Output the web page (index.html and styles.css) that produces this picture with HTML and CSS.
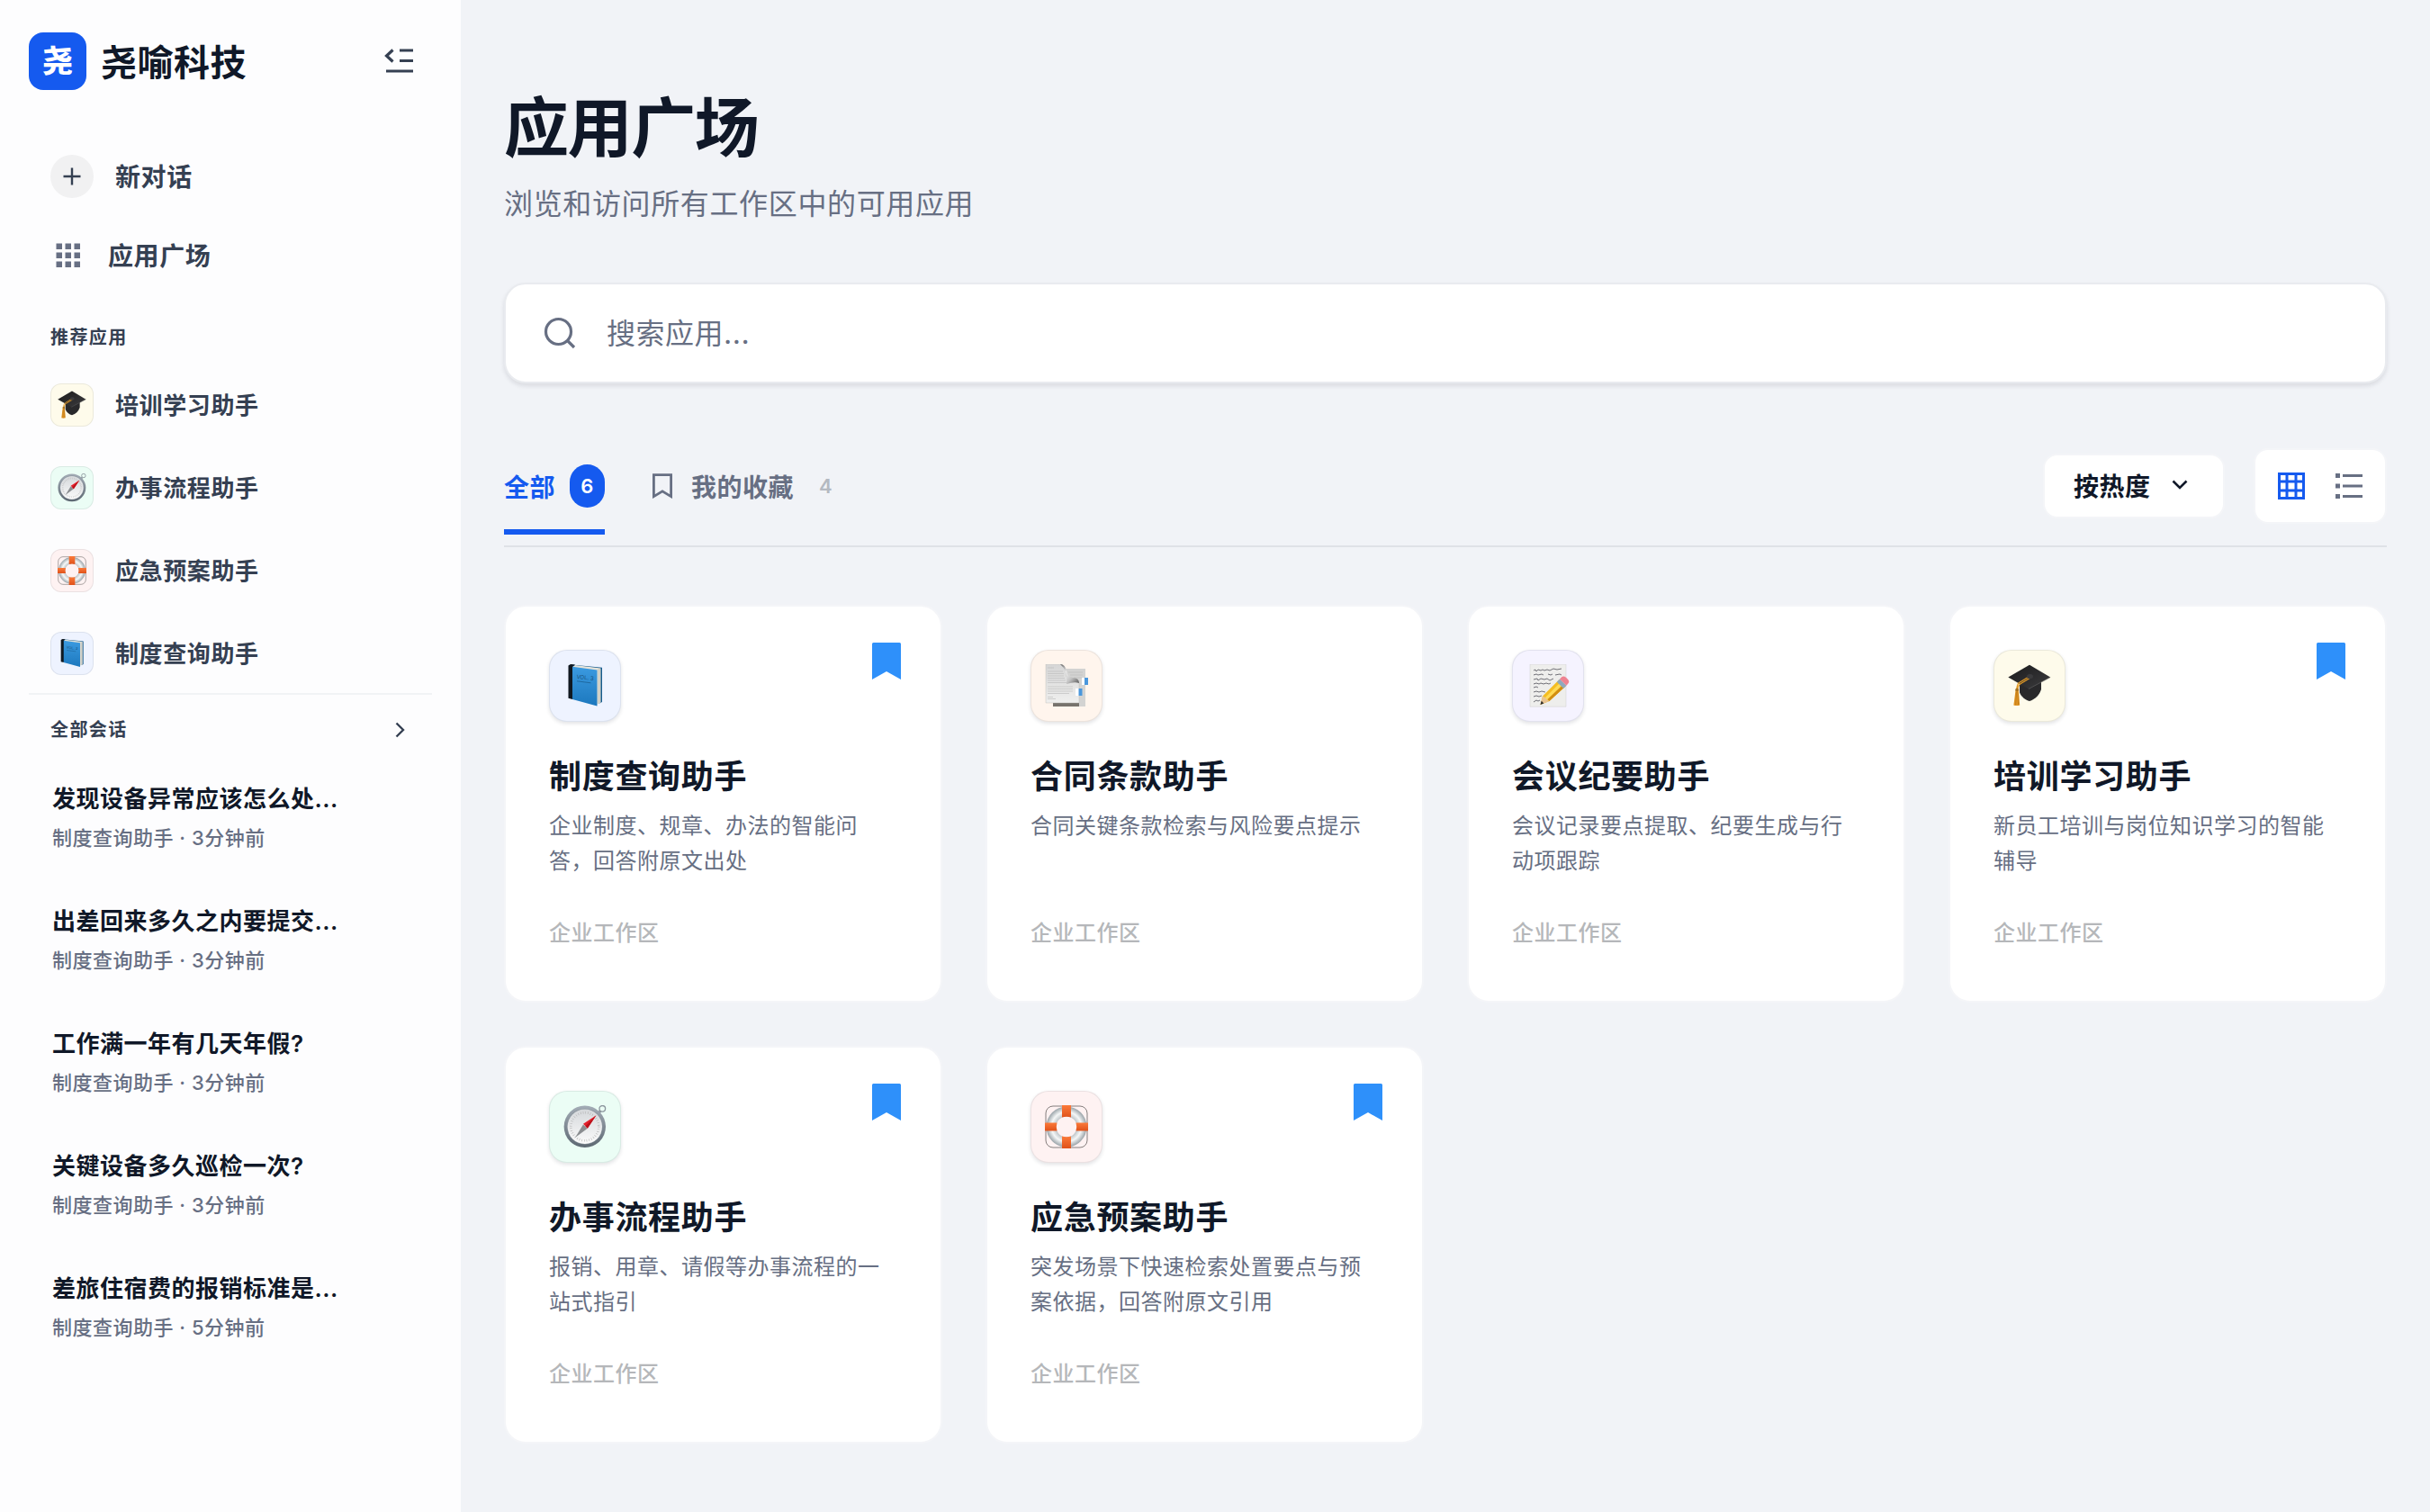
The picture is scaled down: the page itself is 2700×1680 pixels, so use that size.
FILE: index.html
```html
<!DOCTYPE html>
<html lang="zh-CN">
<head>
  <meta charset="UTF-8" />
  <meta name="viewport" content="width=device-width, initial-scale=1" />
  <title>应用广场 - 尧喻科技</title>
  <link rel="stylesheet" href="styles.css">
</head>
<body>

  <!-- Shared app icons -->
  <svg class="sprite" aria-hidden="true">
    <defs>
      <linearGradient id="gBook" x1="0" y1="0" x2="0" y2="1"><stop offset="0" stop-color="#3b9ae0" /><stop offset="1" stop-color="#1c78be" /></linearGradient>
      <linearGradient id="gCap" x1="0" y1="0" x2="1" y2="1"><stop offset="0" stop-color="#1b1b1c" /><stop offset="1" stop-color="#3c3c3e" /></linearGradient>
      <linearGradient id="gRim" x1="0" y1="0" x2="0" y2="1"><stop offset="0" stop-color="#a3acb6" /><stop offset="1" stop-color="#5d6872" /></linearGradient>
      <linearGradient id="gDial" x1="0" y1="0" x2="0" y2="1"><stop offset="0" stop-color="#d5d8db" /><stop offset="1" stop-color="#fbfbfb" /></linearGradient>
      <linearGradient id="gPaper" x1="0" y1="0" x2="0" y2="1"><stop offset="0" stop-color="#d6d6d6" /><stop offset="1" stop-color="#efefee" /></linearGradient>
      <linearGradient id="gCurl" x1="0" y1="0" x2="1" y2="1"><stop offset="0" stop-color="#5a5a5a" /><stop offset=".35" stop-color="#f0f0f0" /><stop offset=".65" stop-color="#c4c4c4" /><stop offset="1" stop-color="#555" /></linearGradient>
      <radialGradient id="gBuoy" gradientUnits="userSpaceOnUse" cx="24" cy="24" r="22"><stop offset=".5" stop-color="#b9c0c4" /><stop offset=".75" stop-color="#f5f7f7" /><stop offset="1" stop-color="#a2abb0" /></radialGradient>
      <linearGradient id="gBand" x1="0" y1="0" x2="0" y2="1"><stop offset="0" stop-color="#fb7a3a" /><stop offset="1" stop-color="#e0521a" /></linearGradient>
    </defs>

    <symbol id="app-cap" viewBox="0 0 48 48">
      <path d="M13 20v11.5c2 5 6.5 8.200 11 9.500 6-2 11-6.500 13-13V17z" fill="#29292b" />
      <path d="M24 .7 47.200 14.500 23 27.500 .3 14.500z" fill="url(#gCap)" />
      <path d="M23 27.500 47.200 14.500" stroke="#666" stroke-width=".6" />
      <path d="M24 13.500 12.500 20.500Q10 22 9.800 29M25 15 14 21.700Q11 23.500 10.700 29" fill="none" stroke="#e29a26" stroke-width="1.300" />
      <ellipse cx="24.500" cy="13.600" rx="3.500" ry="2.700" fill="#3b3b3d" />
      <path d="M8.600 28.500h3.200l1.400 17q-3.500 1.200-6.800 0z" fill="#df9423" />
      <path d="M9.500 31 8.700 45M11 31l.6 14" stroke="#a76710" stroke-width=".5" />
      <circle cx="10.200" cy="28.500" r="1.900" fill="#a87320" />
    </symbol>

    <symbol id="app-compass" viewBox="0 0 48 48">
      <circle cx="43.300" cy="3.800" r="3.300" fill="none" stroke="#8b959d" stroke-width="1.300" />
      <path d="M39 9l2-2.500" stroke="#8b959d" stroke-width="3" />
      <circle cx="23.800" cy="23.800" r="23.200" fill="url(#gRim)" />
      <circle cx="23.800" cy="23.600" r="19.800" fill="#8b959d" />
      <circle cx="23.800" cy="23.800" r="19.200" fill="url(#gDial)" />
      <circle cx="23.800" cy="23.800" r="15.500" fill="none" stroke="#b4b4b4" stroke-width="2.600" stroke-dasharray=".6 2.110" />
      <path d="M22 21.500 13 36 26.500 26z" fill="#8a8d90" />
      <path d="M36.500 11.200 22 20.800l4.800 5z" fill="#e3202b" />
      <path d="M36.500 11.200 24.400 23.300l2.400 2.500z" fill="#b9101a" />
    </symbol>

    <symbol id="app-buoy" viewBox="0 0 48 48">
      <rect x="1" y="1" width="46" height="46" rx="8" fill="none" stroke="#77716f" stroke-width=".9" />
      <circle cx="24" cy="24" r="17" fill="none" stroke="url(#gBuoy)" stroke-width="11" />
      <path d="M19 0h10v13.500q-5-1.500-10 0z" fill="url(#gBand)" />
      <path d="M19 48h10V34.500q-5 1.500-10 0z" fill="url(#gBand)" />
      <path d="M0 19.500v9h13.500q-1.500-4.500 0-9z" fill="url(#gBand)" />
      <path d="M48 19.500v9H34.500q1.500-4.500 0-9z" fill="url(#gBand)" />
    </symbol>

    <symbol id="app-contract" viewBox="0 0 48 48">
      <path d="M9 5h36v42H9z" fill="#d3d3d2" />
      <path d="M9 43h29v4H9z" fill="#77736d" />
      <path d="M26 9h16M28 12h14M32 15h9" stroke="#bbb" stroke-width=".6" />
      <path d="M1 0h17q6 3 6 14 11 1 14 7v22H1z" fill="url(#gPaper)" stroke="#b5b5b4" stroke-width=".4" />
      <path d="M3 4h7M3 8h17M3 10.500h18M3 13h18M3 15.500h19M3 18h20M3 20.500h22M3 25h28M3 27.500h28M3 30h28M3 32.500h24M3 36.500h6M3 38.500h9" stroke="#b8b8b8" stroke-width=".6" />
      <path d="M17 0q6 0 7 8 1 6 7 7 7 0 7 6-5-2-14 1 2-15-7-22z" fill="url(#gCurl)" />
      <path d="M41 15h4v8h-4z" fill="#fff" /><path d="M44 15h4v8h-4z" fill="#4a97dc" />
      <path d="M34 27h4v8h-4z" fill="#fff" /><path d="M37.500 27h4v8h-4z" fill="#4a97dc" />
    </symbol>

    <symbol id="app-memo" viewBox="0 0 48 48">
      <path d="M4 .2h40v47H4z" fill="#eeeeec" stroke="#cfcfcd" stroke-width=".5" />
      <path d="M8 7l2-1 1 2 2-2 3 1 2-1 2 1 3-1 3 1 4-2 4 1 5-1M8 12l3-1 2 1 4-1 2 1m5-1 3 1 2-1m3 1 5-1 2 1M8 17l4-1 1 2 3-2 4 1 3-1 3 2 4-2M8 22l3-1 3 1 2-1 3 1 3-1 3 1 2-1M8 26l3-1 2 1M8 31l3-1 3 1 3-1 4 1M8 36l3-1 3 1 3-1M8 42l3-2 2 1 2-1" fill="none" stroke="#62626a" stroke-width=".9" />
      <path d="M15.500 45 18 35.500 36 17.500 43.500 24.500 25.500 41z" fill="#f4bd22" />
      <path d="M20.500 37.500 38.500 19.500 41 22 23 40z" fill="#ffda55" />
      <path d="M25.500 41l18-16.500-2.200-2.200L23.500 39z" fill="#d18e12" />
      <path d="M15.500 45 18 35.500l3 1.500 2 2.500 2.500 1.500z" fill="#e8c391" />
      <path d="M15.500 45l1.200-4.200 2.700 2.700z" fill="#2e2c2a" />
      <path d="M33.800 19.800 37 16.500l7.500 7.200-3.300 3.200z" fill="#8fa9bd" />
      <path d="M37 16.500 39.500 14q2-1.500 4.500.8l2 2q2.200 2.400.5 4.500l-2 2.400z" fill="#ee8290" />
    </symbol>

    <symbol id="mark" viewBox="0 0 32 41">
      <path d="M1.500 0h29A1.500 1.500 0 0 1 32 1.500V41L16 32 0 41V1.500A1.500 1.500 0 0 1 1.500 0z" fill="#2e90fa" />
    </symbol>
  </svg>

  <div class="layout">
    <aside class="sidebar">
      <div class="brand">
        <div class="logo">尧</div>
        <div class="brand-name">尧喻科技</div>
        <svg class="collapse" width="34" height="32" viewBox="0 0 34 32" fill="none" stroke="#354052" stroke-width="3.2">
          <path d="M10.500 3.500 3.500 10l7 6.500M18 4h15M18 15.500h15M3 27h30" />
        </svg>
      </div>

      <nav class="nav">
        <a class="nav-item new-chat">
          <span class="plus">
            <svg width="20" height="20" viewBox="0 0 20 20" stroke="#354052" stroke-width="2.4"><path d="M10 .5v19M.5 10h19" /></svg>
          </span>
          新对话
        </a>
        <a class="nav-item plaza">
          <svg width="28" height="28" viewBox="0 0 28 28" fill="#676f83">
            <path d="M.5.500H7V7H.5zM10.500.500H17V7h-6.500zM20.500.500H27V7h-6.500zM.5 10.500H7V17H.5zM10.500 10.500H17V17h-6.500zM20.500 10.500H27V17h-6.500zM.5 20.500H7V27H.5zM10.500 20.500H17V27h-6.500zM20.500 20.500H27V27h-6.500z" />
          </svg>
          应用广场
        </a>
      </nav>

      <div class="section-label">推荐应用</div>
      <ul class="pinned">
        <li><span class="tile small yellow"><svg><use href="#app-cap" /></svg></span>培训学习助手</li>
        <li><span class="tile small green"><svg><use href="#app-compass" /></svg></span>办事流程助手</li>
        <li><span class="tile small red"><svg><use href="#app-buoy" /></svg></span>应急预案助手</li>
        <li>
          <span class="tile small blue">
            <svg viewBox="0 0 48 48">
              <g id="app-book">
                <path d="M9 .5 43 3.8V42l-3 1.6L9 38z" fill="#155a8c" />
                <path d="M10 3 13 1l28.5 3.6V42.5L37 45z" fill="#e4e3da" />
                <path d="M38.8 5.5v38.2M40.2 5v38" stroke="#aaa89d" stroke-width=".5" />
                <path d="M10 2.8 37.5 6.5v40L10 39z" fill="url(#gBook)" />
                <path d="M5.5 1.4 8 0l5 .5-3 2.3V39l-4.5-1.2z" fill="#101820" />
                <text class="vol" x="14.500" y="16" transform="rotate(6 15 15)">VOL. 3</text>
                <path d="M15 18.8l15.500 2" stroke="#1b5f93" stroke-width=".8" />
              </g>
            </svg>
          </span>
          制度查询助手
        </li>
      </ul>

      <div class="history-head">
        <span>全部会话</span>
        <svg width="12" height="18" viewBox="0 0 12 18" fill="none" stroke="#354052" stroke-width="2.4"><path d="M1.500 1.500 9 9l-7.500 7.500" /></svg>
      </div>
      <ul class="history">
        <li><b>发现设备异常应该怎么处...</b><span>制度查询助手 · 3分钟前</span></li>
        <li><b>出差回来多久之内要提交...</b><span>制度查询助手 · 3分钟前</span></li>
        <li><b>工作满一年有几天年假?</b><span>制度查询助手 · 3分钟前</span></li>
        <li><b>关键设备多久巡检一次?</b><span>制度查询助手 · 3分钟前</span></li>
        <li><b>差旅住宿费的报销标准是...</b><span>制度查询助手 · 5分钟前</span></li>
      </ul>
    </aside>

    <main class="main">
      <h1>应用广场</h1>
      <p class="subtitle">浏览和访问所有工作区中的可用应用</p>

      <label class="search">
        <svg width="40" height="40" viewBox="0 0 40 40" fill="none" stroke="#676f83" stroke-width="3.2"><circle cx="18.500" cy="18.500" r="14" /><path d="M28.500 28.500 36 36" /></svg>
        <input type="text" placeholder="搜索应用..." />
      </label>

      <div class="toolbar">
        <div class="tabs">
          <div class="tab active">全部 <span class="badge">6</span></div>
          <div class="tab">
            <svg width="24" height="28" viewBox="0 0 24 28" fill="none" stroke="#676f83" stroke-width="2.8"><path d="M2.400 1.600h19.200v24L12 19.800l-9.600 5.800z" /></svg>
            我的收藏 <span class="count">4</span>
          </div>
        </div>
        <div class="sort">
          按热度
          <svg width="18" height="12" viewBox="0 0 18 12" fill="none" stroke="#101828" stroke-width="2.6"><path d="M1.500 1.500 9 9l7.500-7.500" /></svg>
        </div>
        <div class="views">
          <svg width="30" height="30" viewBox="0 0 30 30" fill="none" stroke="#155aef" stroke-width="3"><rect x="1.500" y="1.500" width="27" height="27" /><path d="M10 1v28M20 1v28M1 10h28M1 20h28" /></svg>
          <svg width="30" height="30" viewBox="0 0 30 30" fill="#676f83"><path d="M0 1h5v5H0zM0 12.500h5v5H0zM0 24h5v5H0zM8 2h22v3H8zM8 13.500h22v3H8zM8 25h22v3H8z" /></svg>
        </div>
      </div>

      <div class="grid">
        <div class="card">
          <svg class="mark"><use href="#mark" /></svg>
          <span class="tile blue"><svg viewBox="0 0 48 48"><use href="#app-book" /></svg></span>
          <h2>制度查询助手</h2>
          <p>企业制度、规章、办法的智能问答，回答附原文出处</p>
          <div class="space">企业工作区</div>
        </div>
        <div class="card">
          <span class="tile orange"><svg><use href="#app-contract" /></svg></span>
          <h2>合同条款助手</h2>
          <p>合同关键条款检索与风险要点提示</p>
          <div class="space">企业工作区</div>
        </div>
        <div class="card">
          <span class="tile violet"><svg><use href="#app-memo" /></svg></span>
          <h2>会议纪要助手</h2>
          <p>会议记录要点提取、纪要生成与行动项跟踪</p>
          <div class="space">企业工作区</div>
        </div>
        <div class="card">
          <svg class="mark"><use href="#mark" /></svg>
          <span class="tile yellow"><svg><use href="#app-cap" /></svg></span>
          <h2>培训学习助手</h2>
          <p>新员工培训与岗位知识学习的智能辅导</p>
          <div class="space">企业工作区</div>
        </div>
        <div class="card">
          <svg class="mark"><use href="#mark" /></svg>
          <span class="tile green"><svg><use href="#app-compass" /></svg></span>
          <h2>办事流程助手</h2>
          <p>报销、用章、请假等办事流程的一站式指引</p>
          <div class="space">企业工作区</div>
        </div>
        <div class="card">
          <svg class="mark"><use href="#mark" /></svg>
          <span class="tile red"><svg><use href="#app-buoy" /></svg></span>
          <h2>应急预案助手</h2>
          <p>突发场景下快速检索处置要点与预案依据，回答附原文引用</p>
          <div class="space">企业工作区</div>
        </div>
      </div>
    </main>
  </div>

</body>
</html>
```
FILE: styles.css
```css
* {
  box-sizing: border-box;
}
body {
  margin: 0;
  font-family: Inter, "Noto Sans CJK SC", sans-serif;
  background: #f1f3f7;
  color: #101828;
  letter-spacing: 0.5px;
}
h1, h2, p, ul {
  margin: 0;
  padding: 0;
}
ul {
  list-style: none;
}
svg {
  display: block;
  flex: none;
}
.sprite {
  position: absolute;
  width: 0;
  height: 0;
}
.layout {
  display: flex;
  height: 1680px;
  overflow: hidden;
}

/* Sidebar */
.sidebar {
  width: 512px;
  flex: none;
  padding: 36px 32px 0;
  background: #fdfdfe;
  color: #354052;
}
.brand {
  display: flex;
  align-items: center;
  height: 64px;
}
.logo {
  width: 64px;
  height: 64px;
  border-radius: 16px;
  background: #155aef;
  color: #fff;
  font-size: 34px;
  font-weight: 800;
  line-height: 63px;
  text-align: center;
  letter-spacing: 0;
}
.brand-name {
  margin: -2px 0 0 16px;
  color: #101828;
  font-size: 40px;
  font-weight: 700;
}
.collapse {
  margin: 0 20px 0 auto;
}
.nav {
  margin-top: 52px;
}
.nav-item {
  display: flex;
  align-items: center;
  height: 88px;
  padding: 0 0 3px 24px;
  font-size: 28px;
  font-weight: 600;
  letter-spacing: 0.6px;
}
.plus {
  display: flex;
  align-items: center;
  justify-content: center;
  width: 48px;
  height: 48px;
  margin: 3px 24px 0 0;
  border-radius: 50%;
  background: #f1f1f2;
}
.plaza svg {
  margin: 3px 30px 0 6px;
}
.section-label {
  padding-left: 24px;
  margin-top: 31px;
  font-size: 20px;
  font-weight: 600;
  line-height: 32px;
  letter-spacing: 1.4px;
}
.pinned {
  margin-top: 13px;
}
.pinned li {
  display: flex;
  align-items: center;
  gap: 24px;
  height: 92px;
  padding: 0 0 3px 24px;
  font-size: 26px;
  font-weight: 600;
  letter-spacing: 0.6px;
}
.history-head {
  display: flex;
  align-items: center;
  justify-content: space-between;
  height: 80px;
  margin-top: -2px;
  padding: 0 29px 0 24px;
  border-top: 2px solid #f1f3f5;
  font-size: 20px;
  font-weight: 600;
  letter-spacing: 1.4px;
}
.history-head span {
  padding-bottom: 3px;
}
.history {
  padding: 18px 0 0 26px;
}
.history li {
  display: flex;
  flex-direction: column;
  height: 136px;
}
.history b {
  color: #101828;
  font-size: 26px;
  font-weight: 600;
  line-height: 40px;
}
.history span {
  color: #676f83;
  font-size: 22px;
  font-weight: 500;
  line-height: 32px;
  margin-top: 7px;
}

/* App icon tiles */
.tile {
  display: flex;
  align-items: center;
  justify-content: center;
  width: 80px;
  height: 80px;
  border: 1px solid rgba(16, 24, 40, 0.08);
  border-radius: 20px;
  box-shadow: 0 2px 4px rgba(16, 24, 40, 0.12);
}
.tile svg {
  width: 48px;
  height: 48px;
}
.tile.small {
  width: 48px;
  height: 48px;
  margin-top: 3px;
  border-radius: 12px;
  box-shadow: none;
}
.tile.small svg {
  width: 32px;
  height: 32px;
}
.vol {
  fill: #174f7a;
  font-size: 6px;
  font-weight: 400;
  letter-spacing: 0;
}
.yellow { background: #fefbeb; }
.green { background: #ebfdf5; }
.red { background: #fef2f2; }
.blue { background: #eef3ff; }
.orange { background: #fff5ed; }
.violet { background: #f5f3ff; }

/* Main */
.main {
  flex: 1;
  padding: 98px 48px 0;
}
h1 {
  font-size: 72px;
  font-weight: 700;
  line-height: 88px;
  letter-spacing: -1.4px;
}
.subtitle {
  margin-top: 17px;
  color: #676f83;
  font-size: 32px;
  line-height: 48px;
  letter-spacing: 0.64px;
}
.search {
  display: flex;
  align-items: center;
  gap: 32px;
  height: 112px;
  margin-top: 63px;
  padding-left: 40px;
  border: 2px solid #e9ebef;
  border-radius: 24px;
  background: #fff;
  box-shadow: 0 3px 5px rgba(16, 24, 40, 0.1);
}
.search input {
  flex: 1;
  padding: 0;
  border: 0;
  outline: 0;
  background: none;
  font: inherit;
  font-size: 32px;
  letter-spacing: inherit;
}
.search input::placeholder {
  color: #676f83;
}
.toolbar {
  display: flex;
  align-items: center;
  height: 134px;
  margin-top: 48px;
  border-bottom: 2px solid #dfe2e7;
}
.tabs {
  display: flex;
  gap: 52px;
  margin-right: auto;
}
.tab {
  display: flex;
  align-items: center;
  height: 108px;
  padding-top: 6px;
  border-bottom: 6px solid transparent;
  color: #676f83;
  font-size: 28px;
  font-weight: 600;
}
.tab.active {
  color: #155aef;
  border-color: #155aef;
}
.tab svg {
  margin-right: 20px;
}
.badge {
  width: 39px;
  height: 48px;
  margin-left: 16px;
  border-radius: 20px;
  background: #155aef;
  color: #fff;
  font-size: 22px;
  line-height: 48px;
  text-align: center;
}
.count {
  margin-left: 28px;
  color: #b4b9c1;
  font-size: 22px;
}
.sort {
  display: flex;
  align-items: center;
  gap: 23px;
  width: 202px;
  height: 72px;
  padding: 0 0 2px 32px;
  border: 2px solid #f4f5f8;
  border-radius: 16px;
  background: #fff;
  font-size: 28px;
  font-weight: 600;
}
.views {
  display: flex;
  align-items: center;
  gap: 34px;
  width: 148px;
  height: 84px;
  margin-left: 32px;
  padding-left: 25px;
  border: 2px solid #f4f5f8;
  border-radius: 16px;
  background: #fff;
}
.grid {
  display: grid;
  grid-template-columns: repeat(4, 1fr);
  grid-auto-rows: 442px;
  gap: 48px;
  margin-top: 64px;
}
.card {
  position: relative;
  padding: 48px;
  border: 2px solid #f4f5f8;
  border-radius: 24px;
  background: #fff;
}
.mark {
  position: absolute;
  top: 40px;
  right: 44px;
  width: 32px;
  height: 41px;
}
.card h2 {
  margin-top: 33px;
  font-size: 36px;
  font-weight: 700;
  line-height: 56px;
  letter-spacing: 0.7px;
}
.card p {
  height: 78px;
  margin-top: 7px;
  color: #676f83;
  font-size: 24px;
  line-height: 39px;
}
.space {
  margin-top: 43px;
  color: #b5b7ba;
  font-size: 24px;
  font-weight: 500;
  line-height: 36px;
}
```
